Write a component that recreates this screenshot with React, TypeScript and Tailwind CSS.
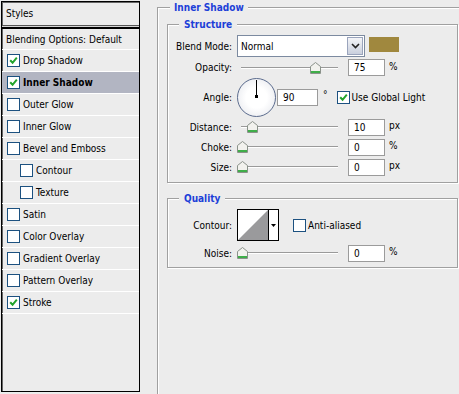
import React from "react";

type StyleItem = { label: string; checked?: boolean; active?: boolean; indent?: boolean };

const styleItems: StyleItem[] = [
  { label: "Drop Shadow", checked: true },
  { label: "Inner Shadow", checked: true, active: true },
  { label: "Outer Glow" },
  { label: "Inner Glow" },
  { label: "Bevel and Emboss" },
  { label: "Contour", indent: true },
  { label: "Texture", indent: true },
  { label: "Satin" },
  { label: "Color Overlay" },
  { label: "Gradient Overlay" },
  { label: "Pattern Overlay" },
  { label: "Stroke", checked: true },
];

function Check({ checked }: { checked?: boolean }) {
  return (
    <span className="flex h-[13px] w-[13px] shrink-0 items-center justify-center border border-[#1c5180] bg-white">
      {checked && (
        <svg width="9" height="9" viewBox="0 0 9 9">
          <path d="M1.2 4.2 L3.6 6.8 L7.8 1.6" stroke="#21a32b" strokeWidth="2" fill="none" />
        </svg>
      )}
    </span>
  );
}

function Thumb() {
  return (
    <svg width="11" height="12" viewBox="0 0 11 12">
      <path d="M0.5 4.5 L5.5 0.5 L10.5 4.5 L10.5 11.5 L0.5 11.5 Z" fill="#f2f2ee" stroke="#8a928a" />
      <path d="M1 9 L10 9 L10 11 L1 11 Z" fill="#3fae49" />
    </svg>
  );
}

// slider + value box + unit
function SliderRow({ label, value, unit, pos }: { label: string; value: string; unit: string; pos: number }) {
  return (
    <div className="flex h-[20px] items-center">
      <span className="w-[64px] text-right">{label}</span>
      <div className="relative ml-[5px] h-[20px] w-[104px]">
        <div className="absolute left-[4px] top-[9px] h-[2px] w-[97px] border-t border-[#9a9a9a] bg-white" />
        <div className="absolute top-[4px]" style={{ left: pos }}>
          <Thumb />
        </div>
      </div>
      <div className="ml-[7px] flex h-[17px] w-[37px] items-center border border-[#9b9b9b] bg-white pl-[5px]">{value}</div>
      <span className="ml-[4px] self-start pt-[1px]">{unit}</span>
    </div>
  );
}

function Legend({ children }: { children: React.ReactNode }) {
  return (
    <legend className="ml-[11px] bg-[#ececec] px-[5px] text-[10px] font-bold leading-[13px] text-[#1c3fd8]">{children}</legend>
  );
}

export default function App() {
  return (
    <div className="flex h-[394px] w-[459px] overflow-hidden bg-[#ececec] font-['DejaVu_Sans_Condensed','DejaVu_Sans',sans-serif] text-[10px] text-black">
      {/* styles list */}
      <div className="ml-px mt-px flex h-[391px] w-[139px] shrink-0 flex-col border border-black shadow-[inset_1px_1px_0_#666]">
        <div className="flex h-[23px] items-center pl-[4px]">Styles</div>
        <div className="h-[4px] border-t border-b-2 border-t-[#555] border-b-black bg-[#d6d6d6]" />
        <div className="flex h-[21px] items-center border-b border-white pl-[4px]">Blending Options: Default</div>
        {styleItems.map((s) => (
          <div
            key={s.label}
            className={
              "flex h-[22px] items-center gap-[3px] border-b border-white " +
              (s.indent ? "pl-[18px] " : "pl-[5px] ") +
              (s.active ? "bg-[#b2b5c2] font-bold" : "")
            }
          >
            <Check checked={s.checked} />
            <span>{s.label}</span>
          </div>
        ))}
      </div>

      {/* Inner Shadow group */}
      <fieldset className="ml-[17px] mt-px h-[400px] flex-1 border-l border-t border-[#a0a0a0] pl-[9px] shadow-[inset_1px_1px_0_#fff]">
        <legend className="ml-[3px] bg-[#ececec] px-[4px] text-[10px] font-bold leading-[13px] text-[#1c3fd8]">Inner Shadow</legend>

        <fieldset className="mt-[4px] w-[291px] border border-[#a0a0a0] pb-[5px] pt-[4px] shadow-[inset_1px_1px_0_#fff,1px_1px_0_#fff]">
          <Legend>Structure</Legend>

          <div className="flex h-[22px] items-center">
            <span className="w-[64px] text-right">Blend Mode:</span>
            <div className="ml-[5px] flex h-[22px] w-[128px] items-center border border-[#7c8aa0] bg-white pl-[3px] pr-px">
              <span className="flex-1">Normal</span>
              <span className="flex h-[18px] w-[16px] items-center justify-center border border-[#9aa4bc] bg-gradient-to-b from-[#f4f5f8] to-[#c9cfdd]">
                <svg width="9" height="6" viewBox="0 0 9 6">
                  <path d="M1 1 L4.5 4.5 L8 1" stroke="#222" strokeWidth="1.6" fill="none" />
                </svg>
              </span>
            </div>
            <div className="ml-[4px] mt-[2px] h-[15px] w-[30px] self-start bg-[#a0883e]" />
          </div>

          <div className="flex h-[21px] items-center">
            <SliderRow label="Opacity:" value="75" unit="%" pos={73} />
          </div>

          <div className="flex h-[39px] items-center">
            <span className="w-[64px] text-right">Angle:</span>
            <div className="relative ml-[5px] h-[39px] w-[39px] rounded-full border-[1.5px] border-[#5c6c8e] bg-[radial-gradient(circle,#ffffff_40%,#e2e4ea)]">
              <div className="absolute left-[18px] top-[1px] h-[17px] w-px bg-black" />
              <div className="absolute left-[17px] top-[16px] h-[3px] w-[3px] bg-black" />
            </div>
            <div className="ml-px flex h-[17px] w-[41px] items-center border border-[#9b9b9b] bg-white pl-[5px]">90</div>
            <span className="ml-[5px] self-start pt-[9px]">°</span>
            <div className="ml-[9px] flex items-center gap-[2px]">
              <Check checked />
              <span>Use Global Light</span>
            </div>
          </div>

          <SliderRow label="Distance:" value="10" unit="px" pos={10} />
          <SliderRow label="Choke:" value="0" unit="%" pos={0} />
          <SliderRow label="Size:" value="0" unit="px" pos={0} />
        </fieldset>

        <fieldset className="mt-[9px] w-[291px] border border-[#a0a0a0] pb-[4px] pt-[4px] shadow-[inset_1px_1px_0_#fff,1px_1px_0_#fff]">
          <Legend>Quality</Legend>

          <div className="flex h-[32px] items-center">
            <span className="w-[64px] text-right">Contour:</span>
            <div className="ml-[5px] flex h-[32px] w-[42px] border border-black bg-white">
              <svg width="30" height="30" viewBox="0 0 30 30">
                <path d="M0 30 L30 0 L30 30 Z" fill="#9a9a9c" />
              </svg>
              <div className="flex flex-1 items-center justify-center border-l border-black">
                <svg width="5" height="3" viewBox="0 0 5 3">
                  <path d="M0 0 L5 0 L2.5 3 Z" fill="#000" />
                </svg>
              </div>
            </div>
            <div className="ml-[14px] flex items-center gap-[2px]">
              <Check />
              <span>Anti-aliased</span>
            </div>
          </div>

          <div className="mt-[2px]">
            <SliderRow label="Noise:" value="0" unit="%" pos={0} />
          </div>
        </fieldset>
      </fieldset>
    </div>
  );
}
